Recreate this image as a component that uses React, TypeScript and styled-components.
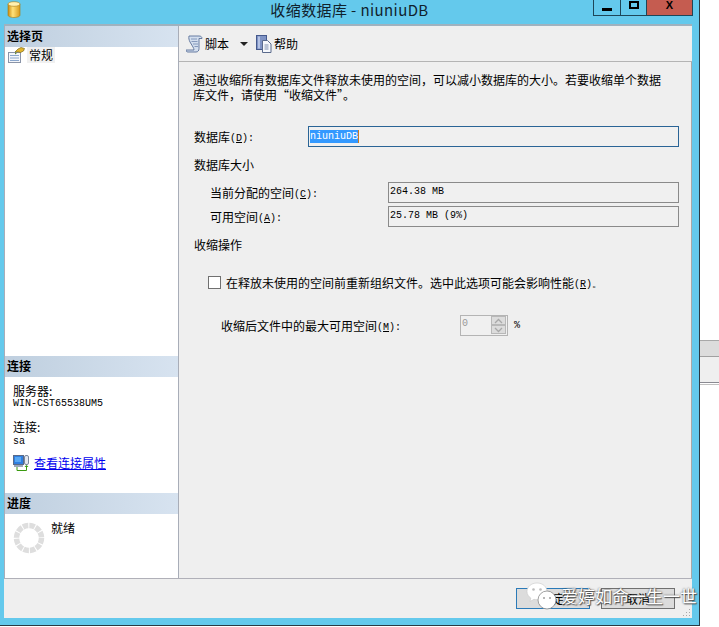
import { FC, ReactNode } from "react";
import styled, { createGlobalStyle } from "styled-components";

const GlobalStyle = createGlobalStyle`
	html, body {
		margin: 0;
		padding: 0;
		background: #ffffff;
	}
	body {
		font-family: "Noto Sans CJK SC", "Liberation Sans", sans-serif;
		font-size: 12px;
		color: #000000;
	}
`;

const mono = `"Liberation Mono", "DejaVu Sans Mono", monospace`;

const DbIcon = () => (
	<svg width="14" height="17" viewBox="0 0 14 17">
		<defs>
			<linearGradient id="db" x1="0" x2="1" y1="0" y2="0">
				<stop offset="0" stopColor="#c98a10" />
				<stop offset="0.4" stopColor="#ffe27a" />
				<stop offset="1" stopColor="#d79a1c" />
			</linearGradient>
		</defs>
		<path d="M1 3v11c0 1.5 2.6 2.5 6 2.5s6-1 6-2.5V3z" fill="url(#db)" stroke="#a87812" strokeWidth="0.6" />
		<ellipse cx="7" cy="3" rx="6" ry="2.3" fill="#fff0b0" stroke="#a87812" strokeWidth="0.6" />
	</svg>
);

const PageIcon = () => (
	<svg width="17" height="16" viewBox="0 0 17 16">
		<rect x="0.5" y="5.5" width="12" height="10" fill="#f4f6fa" stroke="#8a94a8" />
		<path d="M2 8.500h9M2 11h9M2 13.500h9" stroke="#8aa6cc" strokeWidth="1" />
		<path d="M7 5l3-3 3-1.500 3.500 1-1 2.500-3 1.500-2-.5z" fill="#e4b62c" stroke="#7a6a20" strokeWidth="0.7" />
		<path d="M9 6l-2 1.500L7 5.500z" fill="#5a8a30" />
	</svg>
);

const ScriptIcon = () => (
	<svg width="17" height="18" viewBox="0 0 17 18">
		<path d="M3 1h10c2 0 3 1 3 2.500h-3v10c0 2-1 3.500-3 3.500H2c-1.500 0-2-1-2-2h8c0-1-.5-2-1-3L4 7C3 5 2.500 3 3 1z" fill="#d3deee" stroke="#5a7098" strokeWidth="0.9" />
		<path d="M5 4h6M5.500 6.500h6M7 9h5M8.500 11.500h3.500" stroke="#7288ae" strokeWidth="0.8" />
	</svg>
);

const HelpIcon = () => (
	<svg width="16" height="18" viewBox="0 0 16 18">
		<rect x="0.500" y="0.500" width="10" height="14" fill="#7f93c4" stroke="#45598c" />
		<rect x="2" y="1.500" width="2" height="12" fill="#b6c4e6" />
		<path d="M6.500 5.500h5l3.500 3.500v8.500H6.500z" fill="#f6f8fc" stroke="#5a6a8c" />
		<path d="M8.500 10h4M8.500 12h4M8.500 14h4" stroke="#7f8fae" />
	</svg>
);

const ConnectionIcon = () => (
	<svg width="16" height="16" viewBox="0 0 16 16">
		<rect x="0.500" y="0.500" width="10" height="9" fill="#2f7fe0" stroke="#5a6a88" />
		<rect x="2" y="2" width="6" height="5" fill="#58a8f4" />
		<rect x="1" y="10" width="9" height="2" fill="#9aa6ba" />
		<rect x="11.500" y="0.500" width="4" height="9" rx="1.500" fill="#e4e8f0" stroke="#7a869c" />
		<path d="M4 12v3.500h9.500V11" fill="none" stroke="#3a9a10" strokeWidth="1" />
		<path d="M11.500 12l2-2 2 2z" fill="#3a9a10" />
	</svg>
);

const ProgressRing = () => (
	<svg width="32" height="32" viewBox="0 0 32 32">
		<circle cx="16" cy="16" r="12.500" fill="none" stroke="#dedede" strokeWidth="5.500" strokeDasharray="5.500 1.040" />
	</svg>
);

const WeChatMark = () => (
	<svg width="32" height="28" viewBox="0 0 32 28">
		<path d="M11 1C5 1 1 5 1 9.500c0 2.800 1.500 5 3.800 6.500L4 19.500l4-2.200c1 .3 2 .4 3 .4 6 0 10-3.800 10-8.200S17 1 11 1z" fill="#ffffff" stroke="#c8c8c8" strokeWidth="0.6" />
		<circle cx="7.500" cy="7.500" r="1.300" fill="#bdbdbd" />
		<circle cx="14.500" cy="7.500" r="1.300" fill="#bdbdbd" />
		<circle cx="21" cy="18" r="9" fill="#ffffff" stroke="#8a8a8a" strokeWidth="0.8" />
		<circle cx="18" cy="16" r="1" fill="#a0a0a0" />
		<circle cx="24" cy="16" r="1" fill="#a0a0a0" />
	</svg>
);

type HotKeyProps = { k: string; children?: ReactNode };

const HotKey: FC<HotKeyProps> = ({ k, children }) => (
	<Latin>
		(<u>{k}</u>){children ?? ":"}
	</Latin>
);

const App = () => {
	return (
		<>
			<GlobalStyle />
			<Page>
				<Window>
					<TitleBar>
						<TitleIcon>
							<DbIcon />
						</TitleIcon>
						<Title>收缩数据库 - niuniuDB</Title>
						<Controls>
							<MinButton>
								<MinGlyph />
							</MinButton>
							<MaxButton>
								<MaxGlyph />
							</MaxButton>
							<CloseButton>X</CloseButton>
						</Controls>
					</TitleBar>
					<Body>
						<Main>
							<Sidebar>
								<PaneHeader>选择页</PaneHeader>
								<PageRow>
									<PageIcon />
									<PageLabel>常规</PageLabel>
								</PageRow>
								<Spacer />
								<PaneHeader>连接</PaneHeader>
								<ConnectionBlock>
									<InfoLabel>服务器:</InfoLabel>
									<InfoValue>WIN-CST65538UM5</InfoValue>
									<InfoLabel $gap>连接:</InfoLabel>
									<InfoValue $low>sa</InfoValue>
									<LinkRow>
										<ConnectionIcon />
										<LinkText>查看连接属性</LinkText>
									</LinkRow>
								</ConnectionBlock>
								<PaneHeader>进度</PaneHeader>
								<ProgressBlock>
									<ProgressRing />
									<ProgressText>就绪</ProgressText>
								</ProgressBlock>
							</Sidebar>
							<Content>
								<Toolbar>
									<ToolButton>
										<ScriptIcon />
										<span>脚本</span>
									</ToolButton>
									<DropArrow />
									<ToolButton>
										<HelpIcon />
										<span>帮助</span>
									</ToolButton>
								</Toolbar>
								<Form>
									<Intro>
										通过收缩所有数据库文件释放未使用的空间，可以减小数据库的大小。若要收缩单个数据
										<br />
										库文件，请使用“收缩文件”。
									</Intro>
									<DatabaseRow>
										<span>
											数据库
											<HotKey k="D" />
										</span>
										<DatabaseInput>
											<Selected>niuniuDB</Selected>
										</DatabaseInput>
									</DatabaseRow>
									<GroupTitle $top={10}>数据库大小</GroupTitle>
									<SizeGrid>
										<span>
											当前分配的空间
											<HotKey k="C" />
										</span>
										<ReadOnlyField>264.38 MB</ReadOnlyField>
										<span>
											可用空间
											<HotKey k="A" />
										</span>
										<ReadOnlyField>25.78 MB (9%)</ReadOnlyField>
									</SizeGrid>
									<GroupTitle $top={10}>收缩操作</GroupTitle>
									<CheckRow>
										<CheckBox />
										<span>
											在释放未使用的空间前重新组织文件。选中此选项可能会影响性能
											<HotKey k="R">。</HotKey>
										</span>
									</CheckRow>
									<MaxSpaceRow>
										<span>
											收缩后文件中的最大可用空间
											<HotKey k="M" />
										</span>
										<SpinBox>
											<SpinValue>0</SpinValue>
											<SpinButtons>
												<SpinButton>
													<svg width="9" height="6" viewBox="0 0 9 6">
														<path d="M1 5l3.500-3.500L8 5" fill="none" stroke="#a8a8a8" strokeWidth="1.300" />
													</svg>
												</SpinButton>
												<SpinButton>
													<svg width="9" height="6" viewBox="0 0 9 6">
														<path d="M1 1l3.500 3.500L8 1" fill="none" stroke="#a8a8a8" strokeWidth="1.300" />
													</svg>
												</SpinButton>
											</SpinButtons>
										</SpinBox>
										<Percent>%</Percent>
									</MaxSpaceRow>
								</Form>
							</Content>
						</Main>
						<Footer>
							<DialogButton $primary>确定</DialogButton>
							<DialogButton>取消</DialogButton>
							<Grip>
								<svg width="11" height="10" viewBox="0 0 11 10">
									<path d="M9 1h1v1H9zM6 4h1v1H6zM9 4h1v1H9zM3 7h1v1H3zM6 7h1v1H6zM9 7h1v1H9z" fill="#a8a8a8" />
								</svg>
							</Grip>
						</Footer>
					</Body>
					<Watermark>
						<WeChatMark />
						<WatermarkText>爱婷如命一生一世</WatermarkText>
					</Watermark>
				</Window>
				<BehindWindow>
					<BehindHeader />
					<BehindRow />
					<BehindEdge />
				</BehindWindow>
			</Page>
		</>
	);
};

const Page = styled.div`
	display: flex;
	width: 719px;
	height: 627px;
	overflow: hidden;
	background: #ffffff;
`;

const Window = styled.div`
	position: relative;
	display: flex;
	flex-direction: column;
	box-sizing: border-box;
	width: 700px;
	height: 626px;
	padding-bottom: 7px;
	background: #64c9ec;
	border-right: 1px solid #2b3a44;
	border-bottom: 1px solid #2b3a44;
`;

const TitleBar = styled.div`
	display: grid;
	grid-template-columns: 1fr auto 1fr;
	height: 24px;
	flex: none;
`;

const TitleIcon = styled.div`
	padding: 1px 0 0 7px;
`;

const Title = styled.div`
	font-size: 15px;
	letter-spacing: 0.4px;
	line-height: 20px;
	color: #10222c;
	white-space: nowrap;
`;

const Controls = styled.div`
	display: flex;
	justify-self: end;
	align-self: start;
	height: 16px;
	margin-right: 6px;
`;

const ControlButton = styled.div`
	box-sizing: border-box;
	display: flex;
	align-items: center;
	justify-content: center;
	height: 16px;
	border: 1px solid #1e4658;
	border-top: none;
`;

const MinButton = styled(ControlButton)`
	width: 28px;
`;

const MaxButton = styled(ControlButton)`
	width: 26px;
	border-left: none;
	align-items: flex-start;
	padding-top: 1px;
`;

const CloseButton = styled(ControlButton)`
	width: 46px;
	border-left: none;
	background: #c55c50;
	font: bold 11px/11px "Liberation Sans", sans-serif;
	align-items: flex-start;
	padding-top: 0;
`;

const MinGlyph = styled.div`
	width: 10px;
	height: 3px;
	margin-top: 3px;
	background: #000000;
`;

const MaxGlyph = styled.div`
	box-sizing: border-box;
	width: 10px;
	height: 8px;
	border: 2px solid #000000;
	border-top-width: 2px;
`;

const Body = styled.div`
	flex: 1;
	display: flex;
	flex-direction: column;
	min-height: 0;
	margin: 0 7px 0 4px;
	background: #efefef;
	border-top: 2px solid #9fb2bf;
`;

const Main = styled.div`
	flex: 1;
	display: flex;
	min-height: 0;
	border-bottom: 1px solid #b0b0b8;
`;

const Sidebar = styled.div`
	display: flex;
	flex-direction: column;
	flex: none;
	width: 175px;
	box-sizing: border-box;
	background: #ffffff;
	border-left: 1px solid #a8adb8;
	border-right: 1px solid #a8adb8;
`;

const PaneHeader = styled.div`
	flex: none;
	height: 21px;
	padding-left: 2px;
	font-weight: 700;
	font-size: 12px;
	line-height: 20px;
	background: linear-gradient(90deg, #bfcfdf, #d7e3f0);
`;

const PageRow = styled.div`
	display: flex;
	align-items: center;
	gap: 2px;
	height: 16px;
	padding-left: 3px;
`;

const PageLabel = styled.span`
	padding: 0 2px;
	line-height: 16px;
	background: #f0f0f0;
`;

const Spacer = styled.div`
	flex: 1;
`;

const ConnectionBlock = styled.div`
	flex: none;
	box-sizing: border-box;
	height: 116px;
	padding: 7px 0 0 8px;
`;

const InfoLabel = styled.div<{ $gap?: boolean }>`
	line-height: 14px;
	margin-top: ${(props) => (props.$gap ? "11px" : "0")};
`;

const InfoValue = styled.div<{ $low?: boolean }>`
	font-family: ${mono};
	font-size: 10px;
	line-height: 11px;
	margin-top: ${(props) => (props.$low ? "2px" : "0")};
`;

const LinkRow = styled.div`
	display: flex;
	align-items: center;
	gap: 5px;
	margin-top: 7px;
	height: 17px;
`;

const LinkText = styled.span`
	color: #0000ee;
	text-decoration: underline;
`;

const ProgressBlock = styled.div`
	flex: none;
	display: flex;
	align-items: flex-start;
	gap: 6px;
	height: 64px;
	box-sizing: border-box;
	padding: 8px 0 0 8px;
`;

const ProgressText = styled.span`
	line-height: 14px;
	margin-top: -1px;
`;

const Content = styled.div`
	flex: 1;
	display: flex;
	flex-direction: column;
	min-width: 0;
`;

const Toolbar = styled.div`
	display: flex;
	align-items: center;
	flex: none;
	height: 35px;
	padding-left: 7px;
	border-bottom: 1px solid #b4b4b4;
	box-sizing: content-box;
`;

const ToolButton = styled.div`
	display: flex;
	align-items: center;
	gap: 2px;
	line-height: 16px;
`;

const DropArrow = styled.div`
	width: 0;
	height: 0;
	margin: 1px 8px 0 11px;
	border-left: 4px solid transparent;
	border-right: 4px solid transparent;
	border-top: 4px solid #222222;
`;

const Form = styled.div`
	flex: 1;
	box-sizing: border-box;
	padding: 10px 13px 0 14px;
	border-right: 1px solid #a8a8a8;
	white-space: nowrap;
`;

const Intro = styled.div`
	line-height: 15px;
`;

const Latin = styled.span`
	font-family: ${mono};
	font-size: 10px;
	vertical-align: 1px;
`;

const DatabaseRow = styled.div`
	display: grid;
	grid-template-columns: 114px 371px;
	align-items: center;
	margin-top: 24px;
	height: 21px;
	padding-left: 1px;
`;

const DatabaseInput = styled.div`
	box-sizing: border-box;
	height: 21px;
	padding: 3px 0 0 1px;
	background: #f0f0f0;
	border: 1px solid #2a6496;
	font-family: ${mono};
	font-size: 10px;
	line-height: 13px;
`;

const Selected = styled.span`
	display: inline-block;
	background: #3399ff;
	color: #ffffff;
	border-right: 1px solid #c87a20;
`;

const GroupTitle = styled.div<{ $top: number }>`
	margin-top: ${(props) => props.$top}px;
	padding-left: 1px;
	line-height: 16px;
`;

const SizeGrid = styled.div`
	display: grid;
	grid-template-columns: 178px 291px;
	grid-auto-rows: 21px;
	row-gap: 3px;
	align-items: center;
	margin-top: 9px;
	padding-left: 17px;
`;

const ReadOnlyField = styled.div`
	box-sizing: border-box;
	height: 21px;
	padding-left: 1px;
	background: #f0f0f0;
	border: 1px solid #8a8a8a;
	font-family: ${mono};
	font-size: 10px;
	line-height: 17px;
`;

const CheckRow = styled.div`
	display: flex;
	align-items: center;
	gap: 5px;
	margin-top: 21px;
	padding-left: 15px;
	height: 16px;
`;

const CheckBox = styled.div`
	box-sizing: border-box;
	width: 13px;
	height: 13px;
	background: #ffffff;
	border: 1px solid #707070;
`;

const MaxSpaceRow = styled.div`
	display: flex;
	align-items: center;
	margin-top: 25px;
	padding-left: 28px;
	height: 21px;

	> span:first-child {
		width: 239px;
	}
`;

const SpinBox = styled.div`
	display: flex;
	box-sizing: border-box;
	width: 48px;
	height: 21px;
	background: #f0f0f0;
	border: 1px solid #b4b4b4;
`;

const SpinValue = styled.div`
	flex: 1;
	padding-left: 1px;
	font-family: ${mono};
	font-size: 10px;
	line-height: 15px;
	color: #9a9a9a;
`;

const SpinButtons = styled.div`
	display: flex;
	flex-direction: column;
	gap: 1px;
	width: 15px;
	margin: 1px;
`;

const SpinButton = styled.div`
	display: flex;
	align-items: center;
	justify-content: center;
	height: 8px;
	background: #dcdcdc;
	border: 1px solid #b8b8b8;
	box-sizing: content-box;
	margin: -1px 0 0;
	width: 13px;
`;

const Percent = styled.span`
	margin-left: 6px;
	font-family: ${mono};
	font-size: 10px;
`;

const Footer = styled.div`
	position: relative;
	flex: none;
	display: flex;
	justify-content: flex-end;
	align-items: flex-start;
	gap: 11px;
	height: 39px;
	padding: 9px 17px 0 0;
	box-sizing: border-box;
`;

const DialogButton = styled.div<{ $primary?: boolean }>`
	box-sizing: border-box;
	width: 74px;
	height: 21px;
	text-align: center;
	line-height: 19px;
	background: #dcdcdc;
	border: 1px solid ${(props) => (props.$primary ? "#2a7ab8" : "#707070")};
`;

const Grip = styled.div`
	position: absolute;
	right: 1px;
	bottom: 0;
	line-height: 0;
`;

const Watermark = styled.div`
	position: absolute;
	left: 526px;
	top: 582px;
	display: flex;
	align-items: center;
	gap: 3px;
	pointer-events: none;
`;

const WatermarkText = styled.span`
	font-size: 17px;
	line-height: 28px;
	color: #ffffff;
	white-space: nowrap;
	text-shadow: 0 0 2px #444444, 1px 1px 1px #555555;
`;

const BehindWindow = styled.div`
	flex: 1;
	padding-top: 340px;
`;

const BehindHeader = styled.div`
	box-sizing: border-box;
	height: 17px;
	background: #dcdcdc;
	border-top: 1px solid #a8a8a8;
	border-bottom: 1px solid #a0a0a0;
`;

const BehindRow = styled.div`
	height: 25px;
	background: #efefef;
	border-bottom: 1px solid #8a8a92;
`;

const BehindEdge = styled.div`
	height: 1px;
	margin-top: 1px;
	background: #c0c0c0;
`;

export default App;
